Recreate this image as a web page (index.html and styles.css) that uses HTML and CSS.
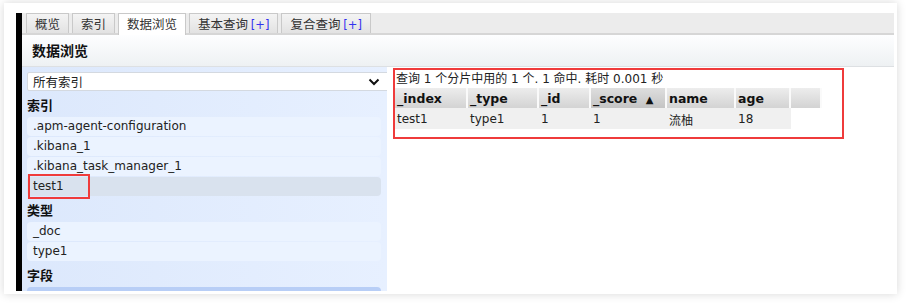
FILE: index.html
```html
<!DOCTYPE html>
<html lang="zh-CN">
<head>
  <meta charset="UTF-8">
  <title>数据浏览</title>
  <link rel="stylesheet" href="styles.css">
</head>
<body>
  <div class="frame">
    <div class="app">
      <!-- tab strip -->
      <div class="tabs">
        <div class="tab">概览</div>
        <div class="tab">索引</div>
        <div class="tab active">数据浏览</div>
        <div class="tab">基本查询 <span class="plus">[+]</span></div>
        <div class="tab">复合查询 <span class="plus">[+]</span></div>
      </div>

      <div class="page-head">数据浏览</div>

      <div class="browser">
        <!-- left filter column -->
        <div class="side">
          <div class="select">
            <span>所有索引</span>
            <svg class="chev" width="12" height="8" viewBox="0 0 12 8"><path d="M1.5 1.5 L6 6 L10.5 1.5" fill="none" stroke="#111" stroke-width="2"/></svg>
          </div>
          <div class="group">索引</div>
          <div class="item">.apm-agent-configuration</div>
          <div class="item">.kibana_1</div>
          <div class="item">.kibana_task_manager_1</div>
          <div class="item selected">test1<span class="mark"></span></div>
          <div class="group">类型</div>
          <div class="item">_doc</div>
          <div class="item">type1</div>
          <div class="group">字段</div>
          <div class="item open"></div>
        </div>

        <!-- results -->
        <div class="main">
          <div class="result">
            <div class="summary">查询 1 个分片中用的 1 个. 1 命中. 耗时 0.001 秒</div>
            <table class="grid">
              <thead>
                <tr>
                  <th class="c-index">_index</th>
                  <th class="c-type">_type</th>
                  <th class="c-id">_id</th>
                  <th class="c-score sorted">_score <span class="arrow">▲</span></th>
                  <th class="c-name">name</th>
                  <th class="c-age">age</th>
                  <th class="c-pad"></th>
                </tr>
              </thead>
              <tbody>
                <tr>
                  <td>test1</td>
                  <td>type1</td>
                  <td>1</td>
                  <td>1</td>
                  <td>流柚</td>
                  <td>18</td>
                  <td class="empty"></td>
                </tr>
              </tbody>
            </table>
          </div>
        </div>
      </div>
    </div>
  </div>
</body>
</html>
```

FILE: styles.css
```css
body { margin: 0; background: #fff; font-family: "DejaVu Sans", "Noto Sans CJK SC", sans-serif; font-size: 12px; color: #222; }
.frame { margin: 3px 11px 13px 4px; height: 278px; padding: 10px 3px 3px 12px; background: #fff; box-shadow: 0 0 9px rgba(0,0,0,0.16); }
.app { height: 278px; border-left: 6px solid #000; display: flex; flex-direction: column; overflow: hidden; }

.tabs { height: 20px; background: #ececec; border-bottom: 2px solid #d6d6d6; display: flex; align-items: flex-end; gap: 3px; padding-left: 4px; }
.tab { height: 19px; line-height: 19px; padding: 0 8px; border: 1px solid #c9c9c9; border-bottom: none; background: linear-gradient(#f4f4f4, #e2e2e2); color: #333; font-family: "Noto Sans CJK SC", "DejaVu Sans", sans-serif; font-size: 12.5px; }
.tab.active { background: #fff; height: 21px; margin-bottom: -2px; }
.plus { color: #3333ee; font-family: "DejaVu Sans", sans-serif; font-size: 11.5px; }

.page-head { height: 33px; line-height: 31px; padding-left: 10px; font-family: "Noto Sans CJK SC", sans-serif; font-weight: bold; font-size: 14px; color: #111; background: linear-gradient(#fdfeff, #eef1f3); border-bottom: 1px solid #dde0e3; }

.browser { flex: 1; display: flex; }
.side { width: 360px; padding: 5px 0 0 5px; background: linear-gradient(to right, #dce8fc, #e7f0ff); overflow: hidden; }
.select { width: 347px; height: 17px; margin-bottom: 1px; background: #fff; border: 1px solid #d4d9e0; border-radius: 2px; display: flex; align-items: center; justify-content: space-between; padding: 0 10px 0 5px; font-family: "Noto Sans CJK SC", sans-serif; font-size: 12.5px; color: #222; }
.group { height: 25px; line-height: 26px; font-family: "Noto Sans CJK SC", sans-serif; font-weight: bold; font-size: 13px; color: #111; }
.item { position: relative; width: 348px; height: 19px; line-height: 19px; margin-bottom: 1px; padding-left: 6px; background: #ebf3ff; border-radius: 4px; color: #222; }
.item.selected { background: #d9e2ee; }
.item.open { background: #b8cef6; }
.mark { position: absolute; left: 1px; top: -3px; width: 58px; height: 21px; border: 2px solid #ef3b3b; }

.main { flex: 1; padding: 1px 0 0 6px; background: #fff; }
.result { width: 447px; height: 67px; border: 2px solid #ef3b3b; }
.summary { height: 18px; line-height: 18px; padding-left: 1px; font-family: "DejaVu Sans", "Noto Sans CJK SC", sans-serif; color: #222; }
.grid { border-collapse: separate; border-spacing: 0; }
.grid th { height: 20px; padding: 0 0 0 2px; border-right: 2px solid #fafafa; text-align: left; font-weight: bold; font-size: 12.5px; color: #111; background: linear-gradient(#ededed, #d3d3d3); }
.grid th.sorted { background: linear-gradient(#dedede, #c4c4c4); }
.arrow { font-size: 10px; margin-left: 4px; }
.grid td { height: 20px; padding: 1px 0 0 2px; background: #f0f0f0; color: #222; font-family: "DejaVu Sans", "Noto Sans CJK SC", sans-serif; }
.grid td.empty { background: #fff; }
.c-index { width: 69px; }
.c-type { width: 67px; }
.c-id { width: 48px; }
.c-score { width: 72px; }
.c-name { width: 65px; }
.c-age { width: 51px; }
.c-pad { width: 27px; }
```
